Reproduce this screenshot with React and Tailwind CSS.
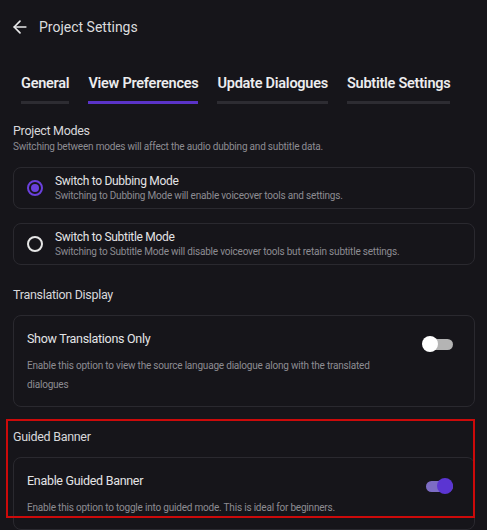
import { ArrowLeft } from 'lucide-react'

const tabs = [
  { label: 'General', active: false },
  { label: 'View Preferences', active: true },
  { label: 'Update Dialogues', active: false },
  { label: 'Subtitle Settings', active: false },
]

function Radio({ checked }) {
  return checked ? (
    <span className="flex h-4 w-4 shrink-0 items-center justify-center rounded-full border-2 border-[#6a40dc]">
      <span className="h-2 w-2 rounded-full bg-[#6a40dc]" />
    </span>
  ) : (
    <span className="h-4 w-4 shrink-0 rounded-full border-2 border-[#e6e6e6]" />
  )
}

function Toggle({ on }) {
  return (
    <span className="relative mt-[6px] flex h-4 w-[31px] shrink-0 items-center">
      <span
        className={`ml-[4px] h-[11px] w-[27px] rounded-full ${on ? 'bg-[#7c6cc4]' : 'bg-[#b4b4b4]'}`}
      />
      <span
        className={`absolute top-0 h-4 w-4 rounded-full ${on ? 'right-0 bg-[#5b35d2]' : 'left-0 bg-white'}`}
      />
    </span>
  )
}

function ModeCard({ checked, title, desc }) {
  return (
    <div className="flex items-center gap-3 rounded-lg border border-[#2a292f] px-[13px] py-[6px]">
      <Radio checked={checked} />
      <div className="flex flex-col whitespace-nowrap">
        <span className="text-[12px] leading-[15px] tracking-[-0.3px] text-[#e4e4e6]">{title}</span>
        <span className="text-[10px] leading-[13px] tracking-[-0.2px] text-[#8d8c92]">{desc}</span>
      </div>
    </div>
  )
}

function ToggleCard({ title, desc, on }) {
  return (
    <div className="flex items-start justify-between rounded-lg border border-[#2a292f] pl-[13px] pr-[21px] pt-[14px] pb-[12px]">
      <div className="flex max-w-[350px] flex-col gap-[8px]">
        <span className="text-[12.5px] leading-[18px] tracking-[-0.3px] text-[#e4e4e6]">{title}</span>
        <span className="text-[10px] leading-[19px] tracking-[-0.2px] text-[#8d8c92]">{desc}</span>
      </div>
      <Toggle on={on} />
    </div>
  )
}

export default function App() {
  return (
    <div
      className="min-h-[530px] w-full overflow-hidden bg-[#16151a] pl-[13px] pr-[12px]"
      style={{ fontFamily: 'Roboto, "Noto Sans", sans-serif' }}
    >
      {/* header */}
      <div className="flex h-[20px] items-center gap-[9px] -ml-[3px] mt-[17px]">
        <ArrowLeft size={20} strokeWidth={2} className="text-[#e8e8ea]" />
        <span className="text-[14px] tracking-[0px] text-[#dcdcde]">Project Settings</span>
      </div>

      {/* tabs */}
      <div className="mt-[37px] flex gap-[19px] pl-[8px] whitespace-nowrap">
        {tabs.map((t) => (
          <div key={t.label} className="flex flex-col">
            <span className="text-[14.5px] font-semibold leading-[20px] tracking-[-0.25px] text-[#ececee]">
              {t.label}
            </span>
            <span
              className={`mt-[7px] h-[3px] ${t.active ? 'bg-[#5a33c8]' : 'bg-[#2d2c32]'}`}
            />
          </div>
        ))}
      </div>

      {/* project modes */}
      <div className="mt-[19px] text-[12.5px] leading-[16px] tracking-[-0.3px] text-[#d8d8da]">Project Modes</div>
      <div className="text-[10px] leading-[16px] tracking-[-0.2px] text-[#8d8c92]">
        Switching between modes will affect the audio dubbing and subtitle data.
      </div>
      <div className="mt-[12px] flex flex-col gap-[14px]">
        <ModeCard
          checked
          title="Switch to Dubbing Mode"
          desc="Switching to Dubbing Mode will enable voiceover tools and settings."
        />
        <ModeCard
          title="Switch to Subtitle Mode"
          desc="Switching to Subtitle Mode will disable voiceover tools but retain subtitle settings."
        />
      </div>

      {/* translation display */}
      <div className="mt-[21px] text-[12.5px] leading-[18px] tracking-[-0.3px] text-[#d8d8da]">Translation Display</div>
      <div className="mt-[11px]">
        <ToggleCard
          title="Show Translations Only"
          desc="Enable this option to view the source language dialogue along with the translated dialogues"
        />
      </div>

      {/* guided banner */}
      <div className="relative mt-[21px]">
        <div className="text-[12.5px] leading-[18px] tracking-[-0.3px] text-[#d8d8da]">Guided Banner</div>
        <div className="mt-[11px]">
          <ToggleCard
            on
            title="Enable Guided Banner"
            desc="Enable this option to toggle into guided mode. This is ideal for beginners."
          />
        </div>
        {/* annotation highlight */}
        <div className="pointer-events-none absolute -left-[7px] -top-[9px] h-[99px] w-[469px] border-2 border-[#cc0a0a]" />
      </div>
    </div>
  )
}
